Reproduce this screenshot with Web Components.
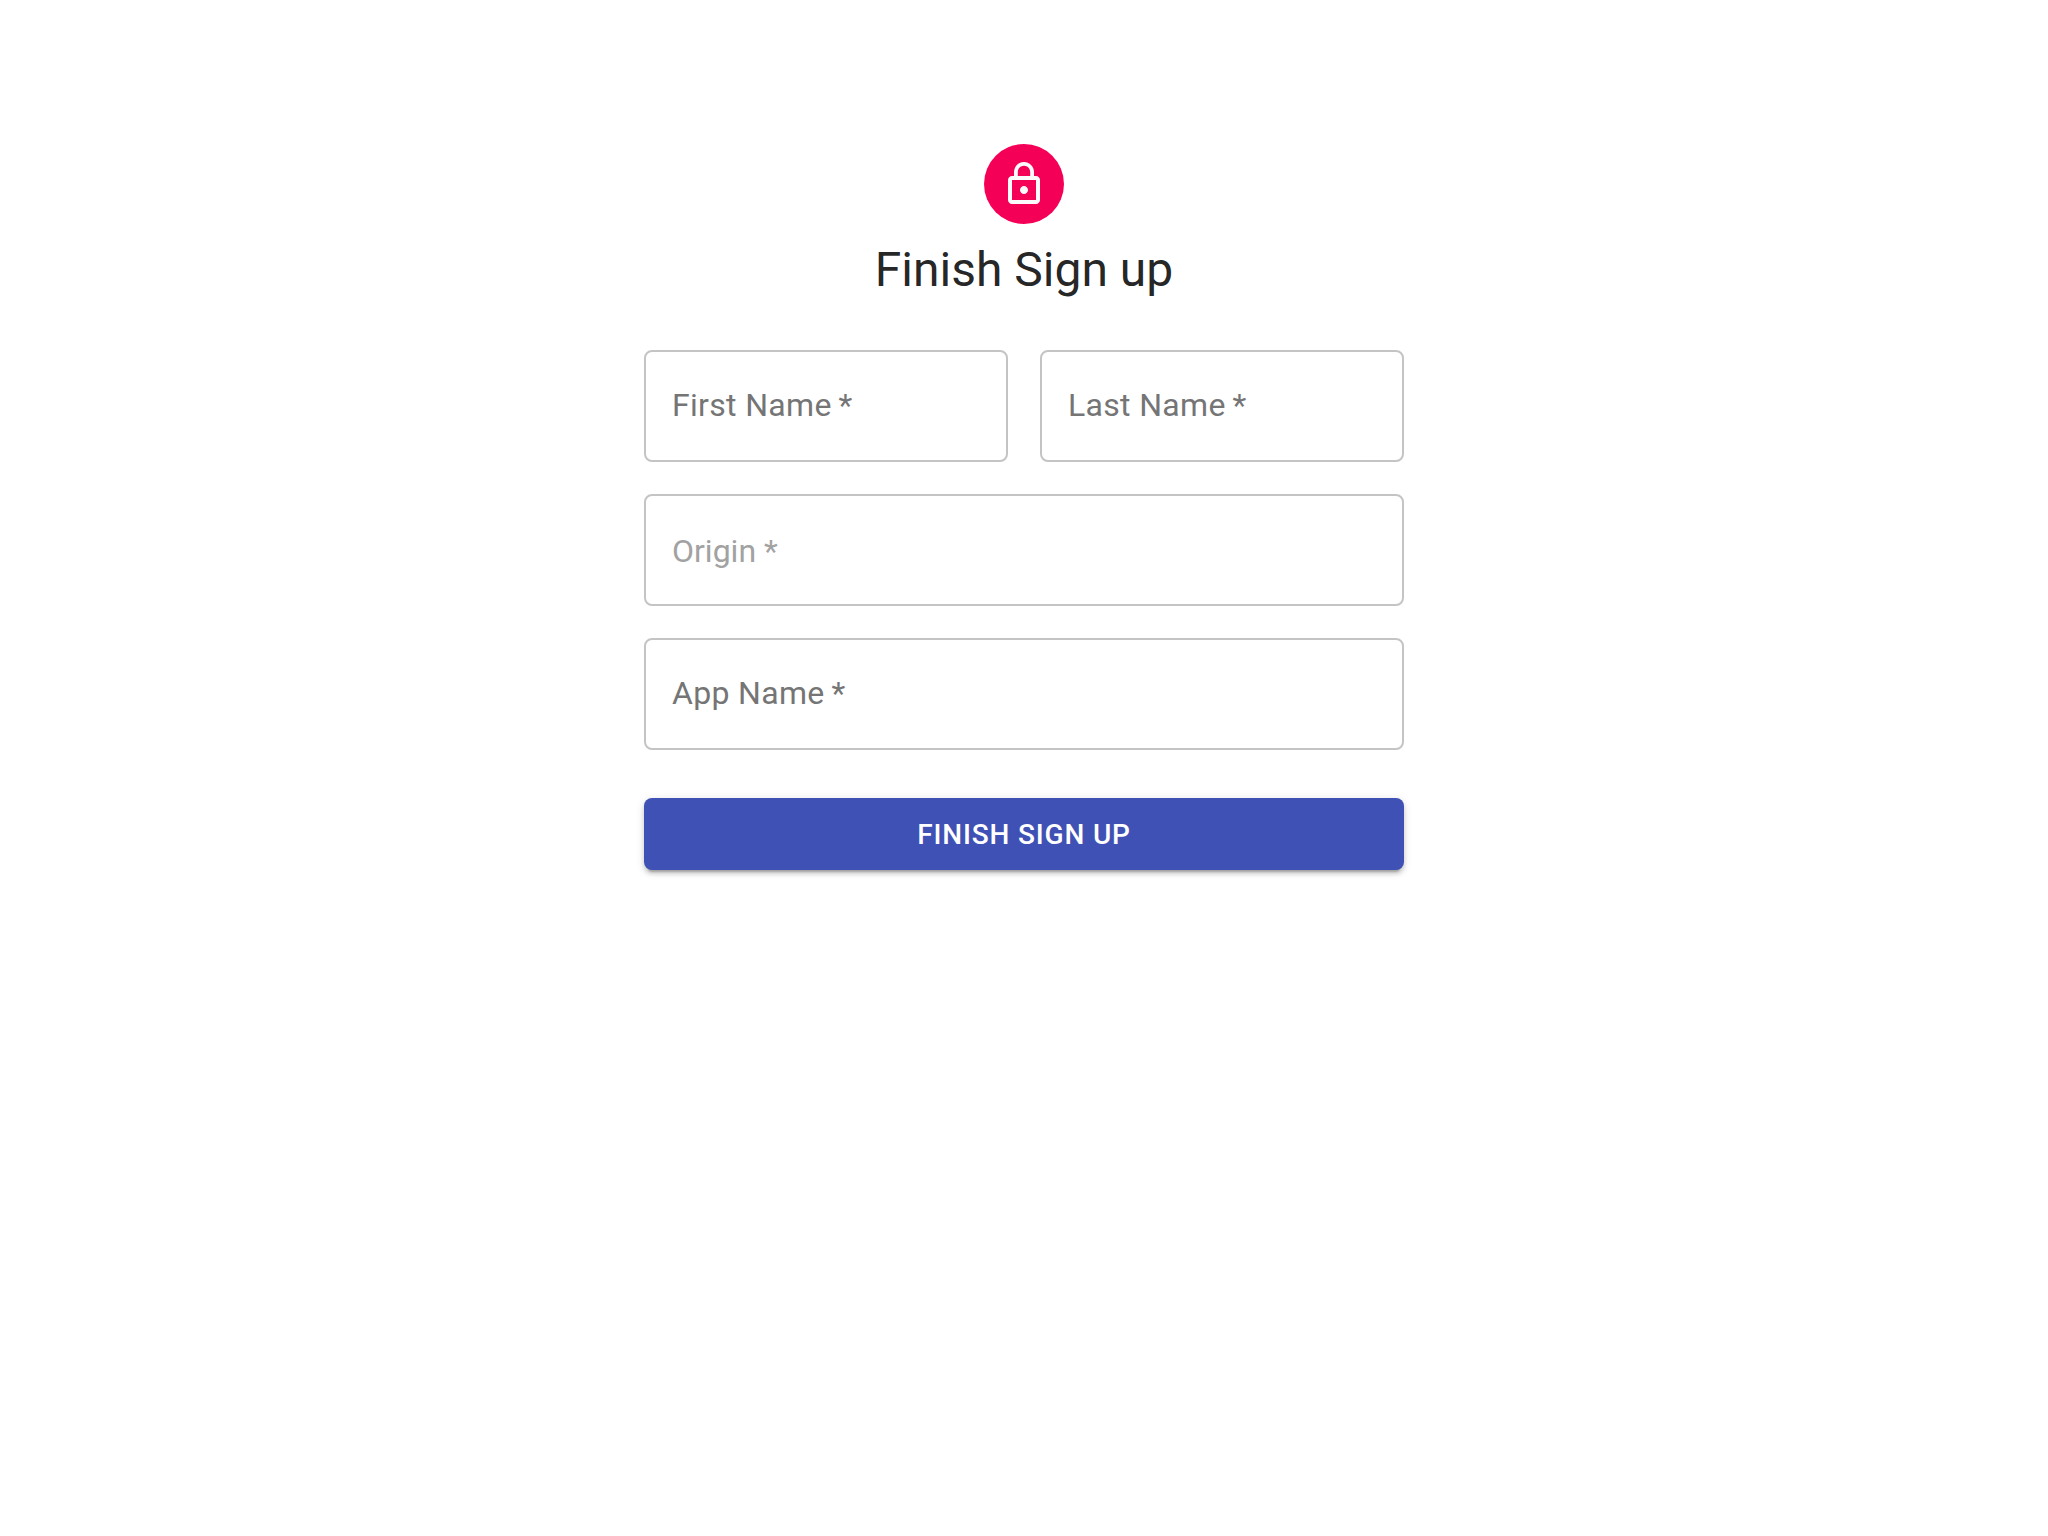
<!DOCTYPE html>
<html lang="en">
<head>
<meta charset="utf-8">
<meta name="viewport" content="width=device-width, initial-scale=1">
<title>Finish Sign up</title>
<style>
  body {
    margin: 0;
    background: #fff;
    color: rgba(0, 0, 0, 0.87);
    font-family: Roboto, "Liberation Sans", sans-serif;
  }
</style>
</head>
<body>
<sign-up-page></sign-up-page>

<template id="lock-avatar-template">
  <style>
    :host {
      display: flex;
      align-items: center;
      justify-content: center;
      width: 80px;
      height: 80px;
      border-radius: 50%;
      background: #f50057;
      color: #fafafa;
    }
    svg { width: 48px; height: 48px; fill: currentColor; }
  </style>
  <svg viewBox="0 0 24 24" aria-hidden="true">
    <path d="M12 17c1.100 0 2-.9 2-2s-.9-2-2-2-2 .9-2 2 .9 2 2 2zm6-9h-1V6c0-2.760-2.240-5-5-5S7 3.240 7 6v2H6c-1.100 0-2 .9-2 2v10c0 1.100.9 2 2 2h12c1.100 0 2-.9 2-2V10c0-1.100-.9-2-2-2zM8.900 6c0-1.710 1.390-3.100 3.100-3.100s3.100 1.390 3.100 3.100v2H8.900V6zM18 20H6V10h12v10z"/>
  </svg>
</template>

<template id="outlined-field-template">
  <style>
    :host { display: block; flex: 1; min-width: 0; }
    .box { display: grid; grid-template-columns: minmax(0, 1fr); }
    input, label { grid-area: 1 / 1; font: 400 32px/38px Roboto, "Liberation Sans", sans-serif; }
    input {
      box-sizing: border-box;
      width: 100%;
      height: 112px;
      margin: 0;
      padding: 2px 26px 0;
      border: 2px solid #c4c4c4;
      border-radius: 8px;
      outline: 0;
      background: transparent;
      color: rgba(0, 0, 0, 0.87);
    }
    input:focus { border-color: #3f51b5; }
    input::placeholder { color: #a2a2a2; opacity: 1; }
    label {
      justify-self: start;
      padding: 36px 28px;
      color: #757575;
      letter-spacing: 0.01em;
      pointer-events: none;
    }
    input:focus + label, input:valid + label { visibility: hidden; }
  </style>
  <div class="box">
    <input id="control" type="text" required>
    <label for="control"></label>
  </div>
</template>

<template id="primary-button-template">
  <style>
    :host { display: block; }
    button {
      display: block;
      width: 100%;
      margin: 0;
      padding: 13px 32px 11px;
      border: 0;
      border-radius: 8px;
      background: #3f51b5;
      color: #fff;
      font: 500 28px/48px Roboto, "Liberation Sans", sans-serif;
      letter-spacing: 0.03em;
      text-transform: uppercase;
      cursor: pointer;
      box-shadow: 0 6px 2px -4px rgba(0, 0, 0, 0.2), 0 4px 4px 0 rgba(0, 0, 0, 0.14), 0 2px 10px 0 rgba(0, 0, 0, 0.12);
    }
    button:hover { background: #303f9f; }
  </style>
  <button type="button"><slot></slot></button>
</template>

<template id="sign-up-page-template">
  <style>
    :host { display: block; padding: 144px 48px 48px; }
    main {
      display: flex;
      flex-direction: column;
      align-items: center;
      max-width: 760px;
      margin: 0 auto;
    }
    h1 { margin: 16px 0 0; font-size: 48px; line-height: 60px; font-weight: 400; }
    form { display: flex; flex-direction: column; gap: 32px; width: 100%; margin-top: 50px; }
    .row { display: flex; gap: 32px; }
    primary-button { margin-top: 16px; }
  </style>
  <main>
    <lock-avatar></lock-avatar>
    <h1>Finish Sign up</h1>
    <form novalidate>
      <div class="row">
        <outlined-field label="First Name" name="firstName"></outlined-field>
        <outlined-field label="Last Name" name="lastName"></outlined-field>
      </div>
      <outlined-field placeholder="Origin *" name="origin"></outlined-field>
      <outlined-field label="App Name" name="appName"></outlined-field>
      <primary-button>Finish Sign up</primary-button>
    </form>
  </main>
</template>

<script>
  class TemplateElement extends HTMLElement {
    constructor() {
      super();
      const template = document.getElementById(this.localName + "-template");
      this.attachShadow({ mode: "open" }).append(template.content.cloneNode(true));
    }
  }

  class LockAvatar extends TemplateElement {}
  class PrimaryButton extends TemplateElement {}
  class SignUpPage extends TemplateElement {}

  class OutlinedField extends TemplateElement {
    connectedCallback() {
      const input = this.shadowRoot.querySelector("input");
      const label = this.shadowRoot.querySelector("label");
      input.name = this.getAttribute("name");
      if (this.hasAttribute("label")) {
        // A thin space separates the label from its required mark.
        label.textContent = this.getAttribute("label") + "\u2009*";
      } else {
        label.remove();
        input.placeholder = this.getAttribute("placeholder");
        input.setAttribute("aria-label", input.placeholder);
      }
    }
  }

  customElements.define("lock-avatar", LockAvatar);
  customElements.define("outlined-field", OutlinedField);
  customElements.define("primary-button", PrimaryButton);
  customElements.define("sign-up-page", SignUpPage);
</script>
</body>
</html>
